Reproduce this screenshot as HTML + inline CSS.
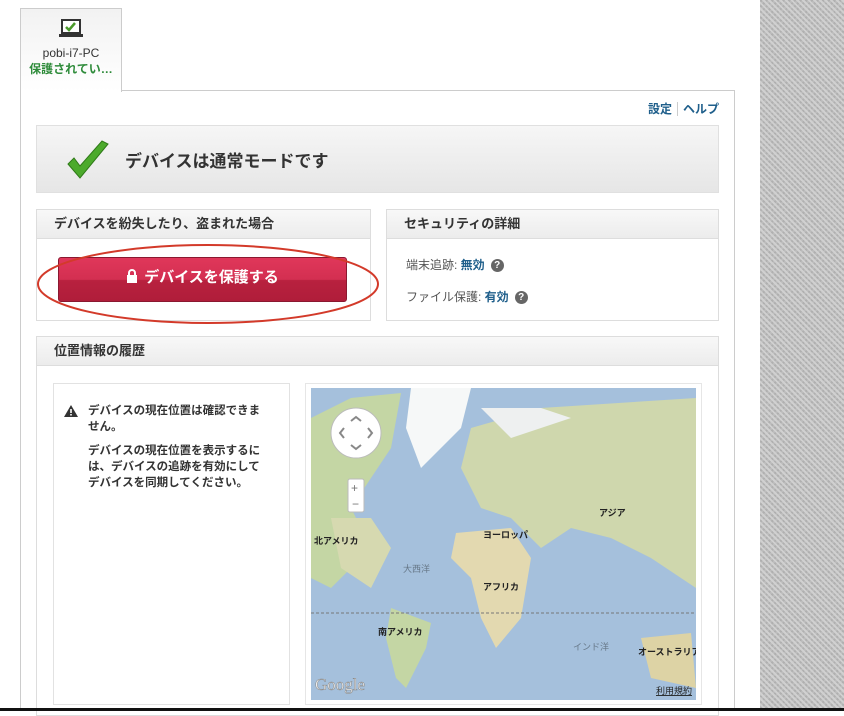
<!DOCTYPE html>
<html><head><meta charset="utf-8"><style>
body{margin:0;width:844px;height:711px;background:#fff;position:relative;overflow:hidden;font-family:"Liberation Sans","Noto Sans CJK JP",sans-serif;color:#333}
.a{position:absolute;box-sizing:border-box}
.pat{left:760px;top:0;width:84px;height:711px;background-color:#bdbdbd;background-image:repeating-linear-gradient(45deg,#d0d0d0 0 2px,transparent 2px 4px),repeating-linear-gradient(-45deg,#b0b0b0 0 2px,transparent 2px 4px)}
.hd{background:linear-gradient(#f8f8f8,#ececec);border-bottom:1px solid #ddd;font-size:13px;font-weight:bold;padding-left:17px;line-height:28px;color:#333}
.box{border:1px solid #ddd;background:#fff}
.lnk{color:#1f5f8b;font-weight:bold}
.q{display:inline-block;width:13px;height:13px;border-radius:50%;background:#666;color:#fff;font-size:10px;text-align:center;line-height:13px;font-weight:bold;margin-left:6px;vertical-align:1px}
</style></head><body>
<div class="a pat"></div>
<!-- main panel -->
<div class="a" style="left:20px;top:90px;width:715px;height:620px;border:1px solid #ccc;border-bottom:none"></div>
<!-- tab -->
<div class="a" style="left:20px;top:8px;width:102px;height:84px;border:1px solid #ccc;border-bottom:none;background:linear-gradient(#f2f2f2,#fafafa 60%,#fff);text-align:center">
 <svg width="24" height="20" style="margin-top:10px" viewBox="0 0 24 20"><rect x="3" y="1" width="18" height="13" fill="#fff" stroke="#333" stroke-width="2"/><rect x="0" y="15" width="24" height="3" fill="#333"/><path d="M7 8l3 3 6-7" stroke="#4a9a2a" stroke-width="2.5" fill="none"/></svg>
 <div style="font-size:12px;color:#333;margin-top:2px">pobi-i7-PC</div>
 <div style="font-size:12px;color:#2e8b3a;font-weight:bold">保護されてい…</div>
</div>
<div class="a" style="left:648px;top:100px;font-size:12px"><span class="lnk">設定</span><span style="border-left:1px solid #ccc;margin:0 5px;height:14px;display:inline-block;vertical-align:-3px"></span><span class="lnk">ヘルプ</span></div>
<!-- banner -->
<div class="a" style="left:36px;top:125px;width:683px;height:68px;background:linear-gradient(#f6f6f6,#e6e6e6);border:1px solid #e0e0e0">
 <svg class="a" style="left:28px;top:12px" width="46" height="44" viewBox="0 0 46 44"><path d="M3 26l12 14L43 6 37 3 15 28 9 20z" fill="#4caa2c" stroke="#2f7a18" stroke-width="1"/></svg>
 <div class="a" style="left:88px;top:21px;font-size:17px;font-weight:bold;color:#333">デバイスは通常モードです</div>
</div>
<!-- lost -->
<div class="a box" style="left:36px;top:209px;width:335px;height:112px">
 <div class="hd">デバイスを紛失したり、盗まれた場合</div>
 <div class="a" style="left:21px;top:47px;width:289px;height:45px;border-radius:3px;background:linear-gradient(#e0375a 0,#d32f51 50%,#b8213f 52%,#b01d3a);border:1px solid #8a1830;color:#fff;font-weight:bold;font-size:15px;text-align:center;line-height:40px">
  <svg width="12" height="14" viewBox="0 0 12 14" style="vertical-align:-1px;margin-right:6px"><path d="M3 6V4a3 3 0 016 0v2" stroke="#fff" stroke-width="2" fill="none"/><rect x="1" y="6" width="10" height="8" fill="#fff"/></svg>デバイスを保護する</div>
</div>
<svg class="a" style="left:36px;top:242px" width="350" height="86"><ellipse cx="172" cy="42" rx="170" ry="39" fill="none" stroke="#d33a2a" stroke-width="2"/></svg>
<!-- security -->
<div class="a box" style="left:386px;top:209px;width:333px;height:112px">
 <div class="hd">セキュリティの詳細</div>
 <div class="a" style="left:19px;top:46px;font-size:12px;color:#555">端末追跡: <span class="lnk">無効</span><span class="q">?</span></div>
 <div class="a" style="left:19px;top:78px;font-size:12px;color:#555">ファイル保護: <span class="lnk">有効</span><span class="q">?</span></div>
</div>
<!-- location -->
<div class="a box" style="left:36px;top:336px;width:683px;height:380px">
 <div class="hd">位置情報の履歴</div>
</div>
<div class="a box" style="left:53px;top:383px;width:237px;height:322px;border-color:#e2e2e2">
 <svg class="a" style="left:10px;top:21px" width="14" height="12" viewBox="0 0 14 12"><path d="M7 0L14 12H0z" fill="#333"/><rect x="6.2" y="4" width="1.6" height="4" fill="#fff"/><rect x="6.2" y="9" width="1.6" height="1.5" fill="#fff"/></svg>
 <div class="a" style="left:34px;top:19px;width:180px;font-size:11.5px;font-weight:bold;line-height:16px;color:#333">デバイスの現在位置は確認できません。<div style="margin-top:8px">デバイスの現在位置を表示するには、デバイスの追跡を有効にしてデバイスを同期してください。</div></div>
</div>
<div class="a box" style="left:305px;top:383px;width:397px;height:322px;border-color:#e6e6e6">
 <svg class="a" style="left:5px;top:4px" width="385" height="312" viewBox="0 0 385 312">
  <rect width="385" height="312" fill="#a5c0dc"/>
  <path d="M0 30 L40 10 L90 5 L80 60 L60 90 L40 120 L55 150 L40 180 L20 200 L0 190Z" fill="#c4d6a4"/>
  <path d="M100 0 L160 0 L150 40 L130 60 L110 80 L95 40Z" fill="#f6f8f8"/>
  <path d="M160 40 L230 20 L385 10 L385 200 L340 170 L300 150 L260 140 L230 160 L200 130 L170 120 L150 80Z" fill="#cfd7ad"/>
  <path d="M170 20 L230 20 L260 30 L200 50Z" fill="#eef0f0"/>
  <path d="M145 145 L200 140 L220 170 L210 230 L185 260 L170 230 L160 190 L140 170Z" fill="#e3d9b0"/>
  <path d="M80 220 L120 235 L115 260 L95 300 L85 290 L75 250Z" fill="#c4d6a4"/>
  <path d="M330 250 L380 245 L385 300 L340 290Z" fill="#ddd3a5"/>
  <path d="M20 130 L60 130 L80 160 L60 200 L30 180Z" fill="#d6d9b0"/>
  <line x1="0" y1="225" x2="385" y2="225" stroke="#777" stroke-dasharray="3 2"/>
  <g font-family="Liberation Sans,Noto Sans CJK JP,sans-serif" font-size="9" font-weight="bold" fill="#222">
   <text x="3" y="156">北アメリカ</text><text x="172" y="150">ヨーロッパ</text><text x="288" y="128">アジア</text>
   <text x="172" y="202">アフリカ</text><text x="67" y="247">南アメリカ</text><text x="327" y="267">オーストラリア</text>
   <text x="92" y="184" font-weight="normal" fill="#678">大西洋</text><text x="262" y="262" font-weight="normal" fill="#678">インド洋</text>
   <text x="4" y="302" font-size="17" font-weight="normal" fill="#eee" stroke="#888" stroke-width=".5" font-family="Liberation Serif,serif">Google</text>
   <text x="345" y="306" font-weight="normal" text-decoration="underline">利用規約</text>
  </g>
  <circle cx="45" cy="45" r="25" fill="#fff" stroke="#bbb"/>
  <path d="M40 33l5-4 5 4M40 57l5 4 5-4M33 40l-4 5 4 5M57 40l4 5-4 5" stroke="#888" stroke-width="2" fill="none"/>
  <rect x="37" y="91" width="16" height="33" rx="2" fill="#fff" stroke="#bbb"/>
  <text x="40" y="104" font-size="12" fill="#777">+</text><text x="41" y="120" font-size="12" fill="#777">−</text>
 </svg>
</div>
<div class="a" style="left:0;top:708px;width:844px;height:3px;background:#111;z-index:5"></div>
</body></html>
